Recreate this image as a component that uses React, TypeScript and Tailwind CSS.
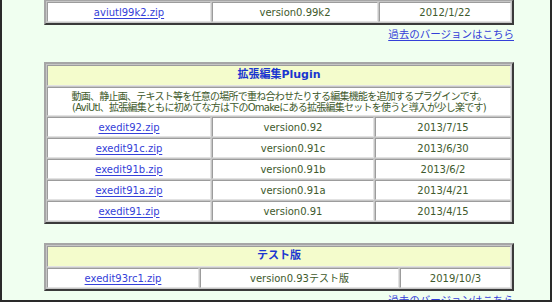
import type { ReactNode } from "react";

type Release = { file: string; version: string; date: string };

const FONT = "font-['DejaVu_Sans','Noto_Sans_CJK_JP',sans-serif]";

const plugin: Release[] = [
  { file: "exedit92.zip", version: "version0.92", date: "2013/7/15" },
  { file: "exedit91c.zip", version: "version0.91c", date: "2013/6/30" },
  { file: "exedit91b.zip", version: "version0.91b", date: "2013/6/2" },
  { file: "exedit91a.zip", version: "version0.91a", date: "2013/4/21" },
  { file: "exedit91.zip", version: "version0.91", date: "2013/4/15" },
];

const testing: Release[] = [{ file: "exedit93rc1.zip", version: "version0.93テスト版", date: "2019/10/3" }];

const cell =
  "h-[20px] p-0 border border-t-[#9c9c9c] border-l-[#9c9c9c] border-b-[#e2e2e2] border-r-[#e2e2e2] bg-white text-center align-middle";

function FileLink({ children }: { children: ReactNode }) {
  return (
    <a href="#" className="text-[#3440d8] underline underline-offset-[2px]">
      {children}
    </a>
  );
}

function OlderVersions() {
  return (
    <div className="w-[470px] text-right text-[10.5px] leading-[14px]">
      <FileLink>過去のバージョンはこちら</FileLink>
    </div>
  );
}

function ReleaseTable({
  title,
  note,
  rows,
  cols,
  className = "",
}: {
  title?: string;
  note?: ReactNode;
  rows: Release[];
  cols: [string, string];
  className?: string;
}) {
  return (
    <table
      className={`w-[470px] table-fixed border-separate border-spacing-[1px] border-2 border-t-[#a6a6a6] border-l-[#a6a6a6] border-b-[#3a3a3a] border-r-[#3a3a3a] bg-[#c6c6c6] text-[10px] ${className}`}
    >
      <colgroup>
        <col className={cols[0]} />
        <col className={cols[1]} />
        <col />
      </colgroup>
      <tbody>
        {title ? (
          <tr>
            <td colSpan={3} className={`${cell} !h-[21px] !bg-[#f4fccc] text-[11px] font-bold text-[#1a36d0]`}>
              {title}
            </td>
          </tr>
        ) : null}
        {note ? (
          <tr>
            <td colSpan={3} className={`${cell} !h-[29px] text-[10px] leading-[11px] tracking-[-0.75px] text-[#3e5a2c]`}>
              {note}
            </td>
          </tr>
        ) : null}
        {rows.map((r) => (
          <tr key={r.file}>
            <td className={cell}>
              <FileLink>{r.file}</FileLink>
            </td>
            <td className={`${cell} text-[#3e5a2c]`}>{r.version}</td>
            <td className={`${cell} text-[#3e5a2c]`}>{r.date}</td>
          </tr>
        ))}
      </tbody>
    </table>
  );
}

export default function App() {
  return (
    <div className={`${FONT} h-[302px] w-[552px] overflow-hidden border-x-2 border-b-2 border-[#2a2a2a] bg-[#f0fff0]`}>
      <div className="ml-[42px]">
        <ReleaseTable
          className="-mt-[1px]"
          rows={[{ file: "aviutl99k2.zip", version: "version0.99k2", date: "2012/1/22" }]}
          cols={["w-[164px]", "w-[166px]"]}
        />
        <div className="mt-[2px]">
          <OlderVersions />
        </div>

        <ReleaseTable
          className="mt-[21px]"
          title="拡張編集Plugin"
          note={
            <>
              動画、静止画、テキスト等を任意の場所で重ね合わせたりする編集機能を追加するプラグインです。
              <br />
              (AviUtl、拡張編集ともに初めてな方は下のOmakeにある拡張編集セットを使うと導入が少し楽です)
            </>
          }
          rows={plugin}
          cols={["w-[164px]", "w-[162px]"]}
        />

        <ReleaseTable className="mt-[19px]" title="テスト版" rows={testing} cols={["w-[152px]", "w-[199px]"]} />
        <div className="mt-[2px]">
          <OlderVersions />
        </div>
      </div>
    </div>
  );
}
